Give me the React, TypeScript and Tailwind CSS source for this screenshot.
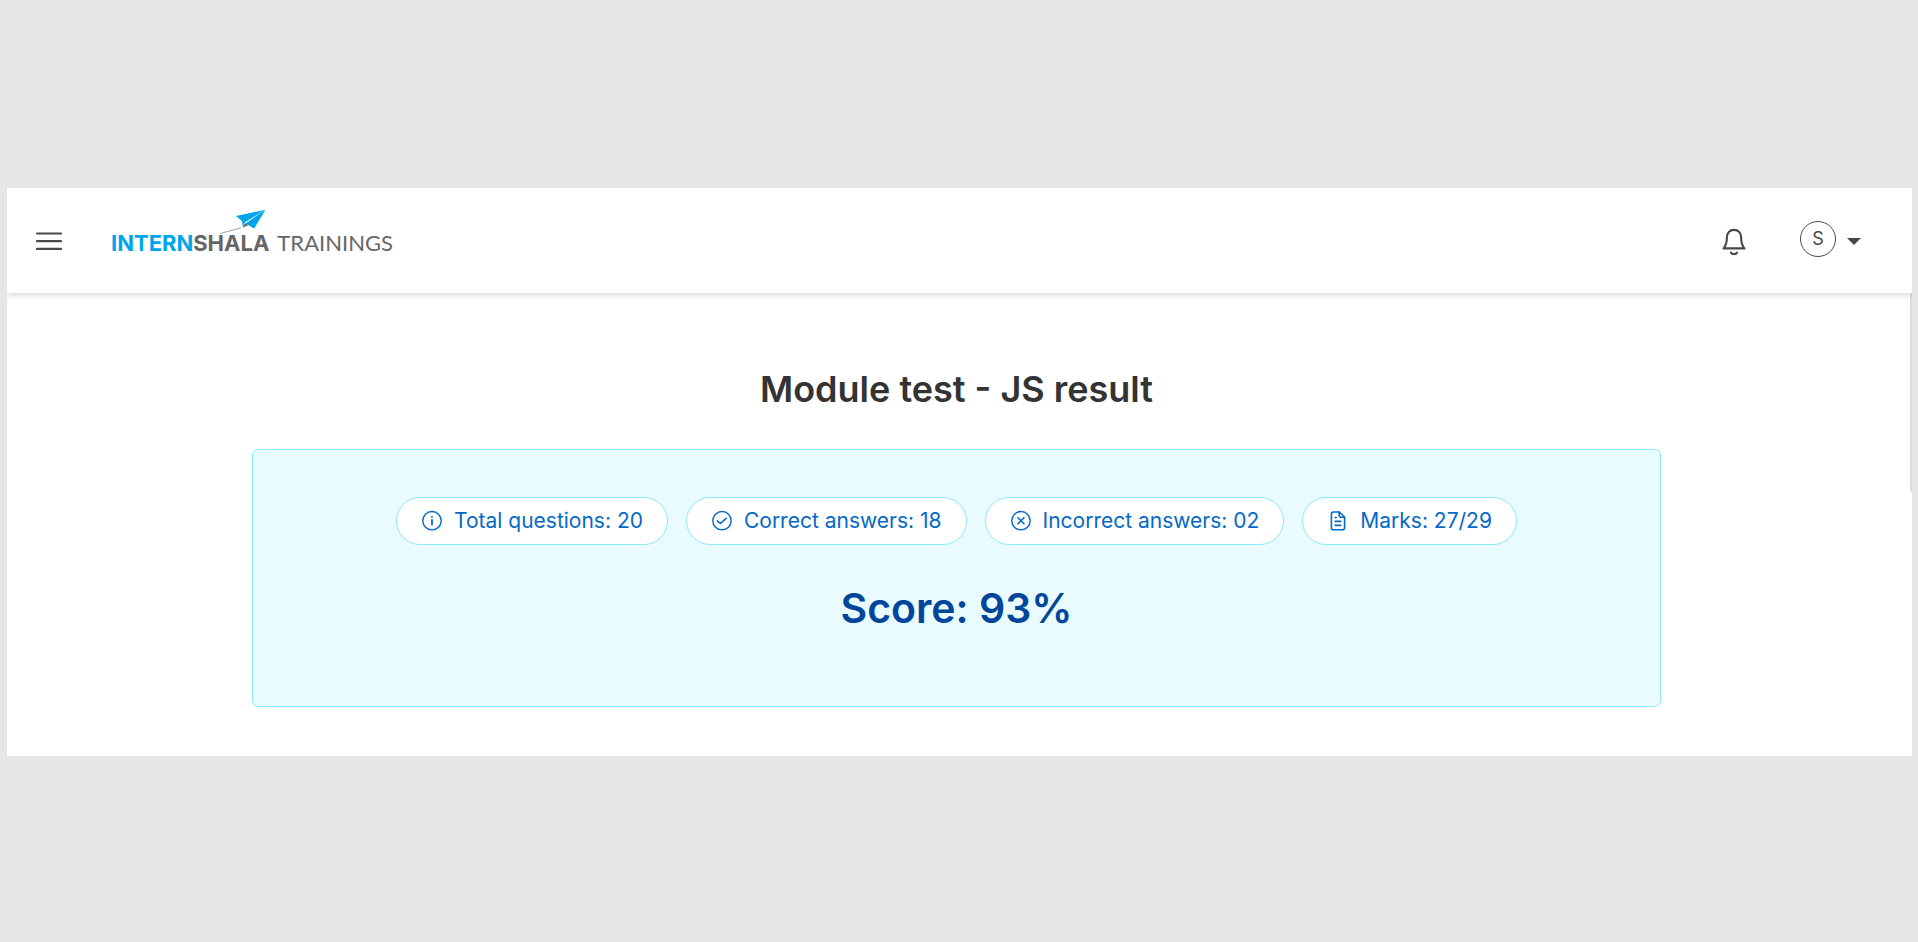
import type { ReactNode } from "react";

function MenuIcon() {
  return (
    <svg width="26" height="20" viewBox="0 0 26 20" fill="none" stroke="#4a4a4a" strokeWidth="2.2" strokeLinecap="round" aria-hidden="true">
      <path d="M1 2.5h24M1 10.2h24M1 17.9h24" />
    </svg>
  );
}

function BellIcon() {
  return (
    <svg width="24" height="28" viewBox="0 0 24 28" fill="none" stroke="#484848" strokeWidth="2.1" strokeLinejoin="round" strokeLinecap="round" aria-hidden="true">
      <path d="M1.5 20.4C4 17.7 4.9 14.5 4.9 9.6 4.9 4.9 7.7 1.9 12 1.9s7.1 3 7.1 7.7c0 4.9.9 8.1 3.4 10.8z" />
      <path d="M8.9 24.6c1.4 2 4.8 2 6.2 0" />
    </svg>
  );
}

function PlaneIcon() {
  return (
    <svg className="absolute -top-[18px] left-[108px]" width="48" height="26" viewBox="0 0 48 26" aria-hidden="true">
      <path d="M1 24.6 22 18.8" stroke="#8a8a8a" strokeWidth="0.8" fill="none" />
      <path d="M46.5 0.8 17 7l6 5z" fill="#00a5ec" />
      <path d="M46.5 0.8 22.9 11.4 23.8 18.6 25.6 13.4z" fill="#00a5ec" />
      <path d="M46.5 0.8 26.4 14.4 35.2 19.4z" fill="#00a5ec" />
      <path d="M24 18.8 26 14.2l3.2 1.8z" fill="#5b5b5b" />
    </svg>
  );
}

function RoundIcon({ children }: { children: ReactNode }) {
  return (
    <svg width="22" height="22" viewBox="0 0 22 22" fill="none" stroke="currentColor" strokeWidth="1.4" strokeLinecap="round" strokeLinejoin="round" aria-hidden="true">
      <circle cx="11" cy="10.7" r="9.2" />
      {children}
    </svg>
  );
}

function FileIcon() {
  return (
    <svg width="22" height="22" viewBox="0 0 22 22" fill="none" stroke="currentColor" strokeWidth="1.6" strokeLinecap="round" strokeLinejoin="round" aria-hidden="true">
      <path d="M12.4 2H6.4A2 2 0 0 0 4.4 4v13.8a2 2 0 0 0 2 2h9.2a2 2 0 0 0 2-2V7.2z" />
      <path d="M12.2 2v3.6a1.6 1.6 0 0 0 1.6 1.6h3.8M8.2 7.6h1M8.2 11.4h5.6M8.2 15.4h5.6" />
    </svg>
  );
}

const stats = [
  {
    text: "Total questions: 20",
    icon: (
      <RoundIcon>
        <path d="M11 10v4.6" strokeWidth="1.8" />
        <path d="M11 6.8v.1" strokeWidth="1.8" />
      </RoundIcon>
    ),
  },
  {
    text: "Correct answers: 18",
    icon: (
      <RoundIcon>
        <path d="m6.4 10.9 3 2.6 5.8-5.2" strokeWidth="1.6" />
      </RoundIcon>
    ),
  },
  {
    text: "Incorrect answers: 02",
    icon: (
      <RoundIcon>
        <path d="m8 7.7 6 6M14 7.7l-6 6" strokeWidth="1.6" />
      </RoundIcon>
    ),
  },
  { text: "Marks: 27/29", icon: <FileIcon /> },
];

export default function App() {
  return (
    <div className="min-h-screen bg-[#e6e6e6] py-[188px] pl-[7px] pr-[6px] font-['Inter','Liberation_Sans',sans-serif]">
      <div className="overflow-hidden bg-white">
        <header className="relative flex h-[105px] items-center justify-between bg-white pl-[29px] pr-[51px] shadow-[0_1px_8px_rgba(0,0,0,0.2)]">
          <div className="flex items-center gap-[49px]">
            <button type="button" aria-label="Open menu">
              <MenuIcon />
            </button>
            <a href="#" className="relative flex items-baseline gap-2 pt-1 text-[22px] leading-6 text-[#666]">
              <span className="font-bold">
                <span className="text-[#00a5ec]">INTERN</span>SHALA
              </span>
              <span className="font-['Lato',sans-serif]">TRAININGS</span>
              <PlaneIcon />
            </a>
          </div>
          <div className="flex items-center gap-[54px]">
            <button type="button" aria-label="Notifications" className="pt-0.5">
              <BellIcon />
            </button>
            <button type="button" aria-label="Account" className="flex items-center gap-[11px] pb-[3px]">
              <span className="flex size-9 items-center justify-center rounded-full border border-[#484848] text-[18px] leading-6 text-[#484848]">S</span>
              <svg className="mt-1" width="14" height="7" viewBox="0 0 14 7" fill="#484848" aria-hidden="true">
                <path d="M0 0h14L7 7z" />
              </svg>
            </button>
          </div>
        </header>

        <main className="flex">
          <div className="flex flex-1 flex-col items-center pt-[72px] pr-[249px] pb-[49px] pl-[245px]">
            <h1 className="text-[36px] leading-[48px] font-semibold text-[#333]">Module test - JS result</h1>
            <section className="mt-9 flex w-full flex-col items-center rounded-md border border-[#8de9fc] bg-[#e9fbff] pt-[47px] pb-[68px]">
              <ul className="flex flex-wrap justify-center gap-[18px]">
                {stats.map((s) => (
                  <li key={s.text} className="flex h-12 items-center gap-[11px] rounded-full border border-[#8de9fc] bg-white px-6 text-[21px] leading-7 text-[#0569c6]">
                    {s.icon}
                    <span>{s.text}</span>
                  </li>
                ))}
              </ul>
              <p className="mt-[33px] text-[41px] leading-[60px] font-semibold text-[#00469b]">Score: 93%</p>
            </section>
          </div>
          <div className="h-[199px] w-[2px] rounded-bl-sm bg-[#dcdcdc]" />
        </main>
      </div>
    </div>
  );
}
